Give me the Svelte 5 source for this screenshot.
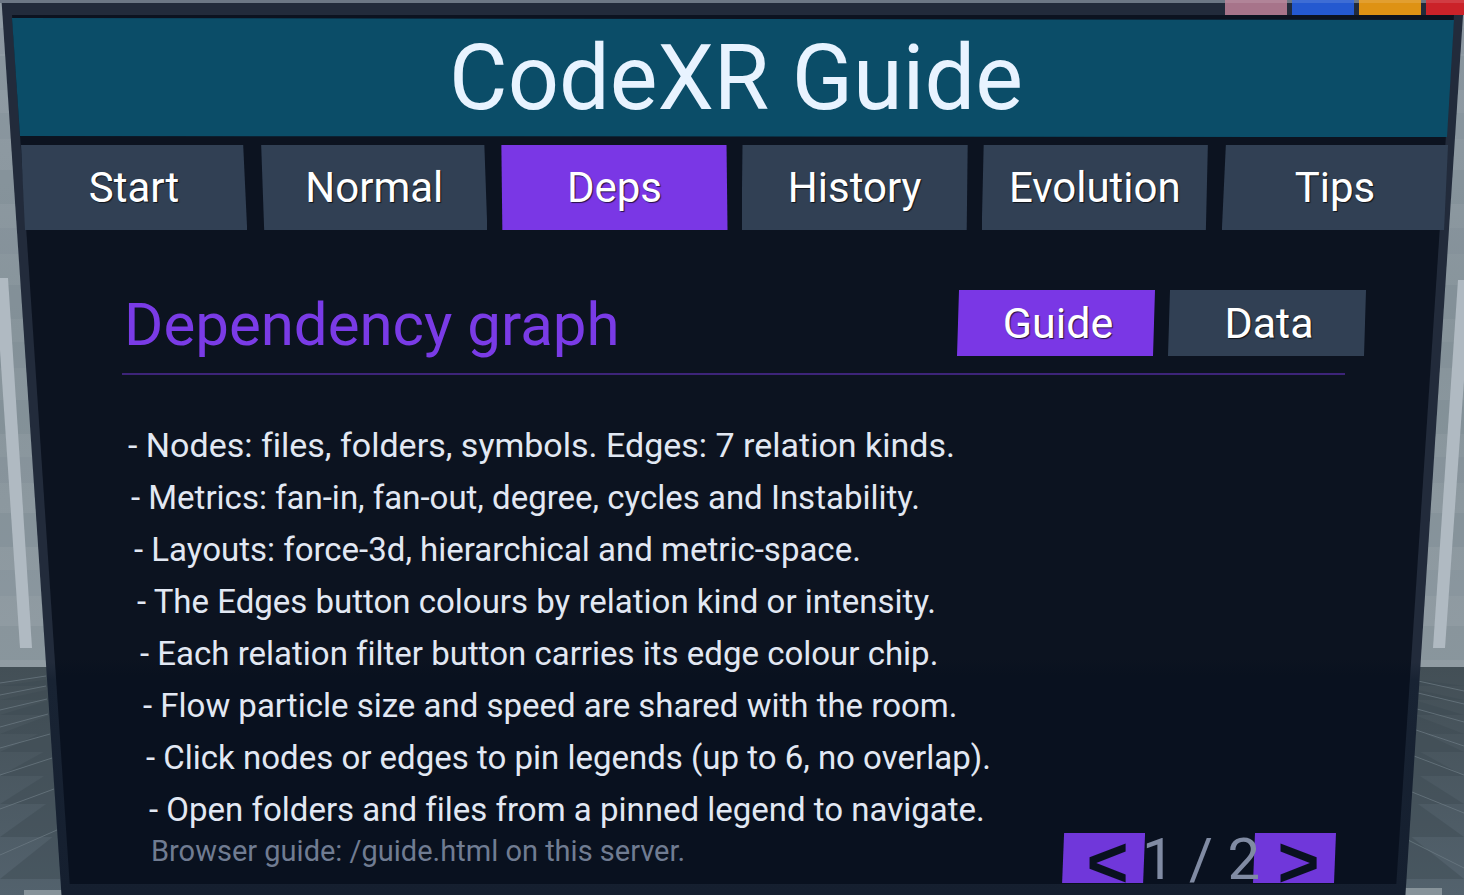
<script>
    const tabs = [
        { name: 'Start', lean: 4 },
        { name: 'Normal', lean: 3 },
        { name: 'Deps', lean: 1 },
        { name: 'History', lean: -1 },
        { name: 'Evolution', lean: -2 },
        { name: 'Tips', lean: -4 }
    ];

    const views = ['Guide', 'Data'];

    const lines = [
        'Nodes: files, folders, symbols. Edges: 7 relation kinds.',
        'Metrics: fan-in, fan-out, degree, cycles and Instability.',
        'Layouts: force-3d, hierarchical and metric-space.',
        'The Edges button colours by relation kind or intensity.',
        'Each relation filter button carries its edge colour chip.',
        'Flow particle size and speed are shared with the room.',
        'Click nodes or edges to pin legends (up to 6, no overlap).',
        'Open folders and files from a pinned legend to navigate.'
    ];

    const controls = ['pink', 'blue', 'orange', 'red'];
    const wallRows = [28, 56, 113, 170, 228, 285, 342, 400, 457, 513, 570, 626];
    const floorRows = [682, 692, 703, 718, 732, 752, 776, 805, 843];

    let activeTab = $state('Deps');
    let activeView = $state('Guide');
    let page = $state(1);
</script>

<main class="room">
    <svg class="backdrop" viewBox="0 0 1464 895" preserveAspectRatio="none" aria-hidden="true">
        <defs>
            <linearGradient id="wall" x1="0" y1="0" x2="0" y2="1">
                <stop offset="0" stop-color="#929da6" />
                <stop offset="0.5" stop-color="#87949b" />
                <stop offset="1" stop-color="#919ca3" />
            </linearGradient>
            <linearGradient id="floor" x1="0" y1="0" x2="0" y2="1">
                <stop offset="0" stop-color="#434f56" />
                <stop offset="1" stop-color="#53626d" />
            </linearGradient>
        </defs>
        <rect width="1464" height="667" fill="url(#wall)" />
        {#each wallRows as y, i}
            <rect {y} width="1464" height={i % 2 ? 34 : 26} fill="#74828a" opacity={i % 2 ? 0.25 : 0.15} />
        {/each}
        <polygon points="0,278 8,278 32,648 20,648 0,350" fill="#b0bac2" />
        <polygon points="1464,280 1458,280 1433,648 1445,648 1464,380" fill="#b0bac2" />
        <rect y="667" width="1464" height="228" fill="url(#floor)" />
        <g fill="#3d4a52" opacity="0.45">
            {#each floorRows as y, i}
                <polygon points="0,{y + 4 + i * 4} 60,{y - 4 - i} 60,{y + 4 + i * 4}" />
                <polygon points="1464,{y + 4 + i * 4} 1404,{y - 4 - i} 1404,{y + 4 + i * 4}" />
            {/each}
        </g>
        <g stroke="#6e7c85" stroke-width="1" opacity="0.7">
            <path d="M0 683 46 676M0 695 46 686M0 710 47 699M0 727 48 714M0 748 50 734M0 775 52 758M0 809 54 789M0 855 57 830" />
            <path d="M1464 691 1418 681M1464 704 1418 693M1464 722 1417 709M1464 746 1416 730M1464 775 1414 756M1464 813 1412 792M1464 868 1408 840" />
        </g>
        <rect x="24" y="890" width="40" height="5" fill="#87939a" />
        <rect x="1400" y="888" width="42" height="7" fill="#87939a" />
    </svg>

    <section class="panel">
        <div class="controls">
            {#each controls as color}
                <button class="control {color}" aria-label={color}></button>
            {/each}
        </div>

        <div class="screen">
            <header>
                <h1>CodeXR Guide</h1>
            </header>

            <nav class="tabs">
                {#each tabs as tab}
                    <button
                        class="tile"
                        class:active={activeTab === tab.name}
                        style:--l="{Math.max(0, tab.lean)}px"
                        style:--r="{Math.max(0, -tab.lean)}px"
                        onclick={() => (activeTab = tab.name)}
                    >{tab.name}</button>
                {/each}
            </nav>

            <div class="heading">
                <h2>Dependency graph</h2>
                <div class="views">
                    {#each views as view}
                        <button class="tile" class:active={activeView === view} onclick={() => (activeView = view)}>{view}</button>
                    {/each}
                </div>
            </div>
            <hr />

            <ul>
                {#each lines as line, i}
                    <li style:padding-left="{i * 3}px">- {line}</li>
                {/each}
            </ul>

            <footer>
                <p>Browser guide: /guide.html on this server.</p>
                <div class="pager">
                    <button class="arrow" onclick={() => (page = 1)}>&lt;</button>
                    <span>{page} / 2</span>
                    <button class="arrow" onclick={() => (page = 2)}>&gt;</button>
                </div>
            </footer>
        </div>
    </section>
</main>

<style>
    :global(body) {
        margin: 0;
        background: #46535c;
    }

    .room {
        position: relative;
        min-height: 100vh;
        display: flex;
        font-family: Roboto, "Liberation Sans", sans-serif;
        font-variant-ligatures: none;
    }

    .backdrop {
        position: absolute;
        inset: 0;
        width: 100%;
        height: 100%;
    }

    .panel {
        position: relative;
        z-index: 0;
        flex: 1;
        display: flex;
        flex-direction: column;
        padding-bottom: 11px;
        box-sizing: border-box;
    }

    /* frame and screen taper towards the floor */
    .panel::before,
    .screen::before {
        content: "";
        position: absolute;
        inset: 0;
        z-index: -1;
    }

    .panel::before {
        background: linear-gradient(#222b3b 74%, #182333 76%, #151f2f);
        clip-path: polygon(0.1% 0, 100% 0, 96% 100%, 4.2% 100%);
    }

    .screen::before {
        background: linear-gradient(#0c1320 74%, #09111f 76%);
        clip-path: polygon(0 0, 100% 0, 96% 100%, 4% 100%);
    }

    .controls {
        display: flex;
        justify-content: flex-end;
        gap: 5px;
        height: 15px;
        background: linear-gradient(#6c7785 3px, transparent 3px);
    }

    .control {
        width: 62px;
        padding: 0;
        border: 0;
        border-top: 3px solid rgba(255, 255, 255, 0.12);
    }

    .control:last-child {
        width: 38px;
    }

    .pink { background-color: #a7748a; }
    .blue { background-color: #2459d0; }
    .orange { background-color: #de9214; }
    .red { background-color: #cb2229; }

    .screen {
        position: relative;
        z-index: 0;
        flex: 1;
        display: flex;
        flex-direction: column;
        margin: 0 10px 0 12px;
        padding-top: 3px;
    }

    header {
        height: 119px;
        display: flex;
        align-items: center;
        justify-content: center;
        background: #0b4d68;
        clip-path: polygon(0 0, 100% 2px, calc(100% - 7px) 100%, 8px 118px);
    }

    h1 {
        margin: 0;
        padding: 3px 0 0 6px;
        font-size: 90px;
        line-height: 108px;
        font-weight: 400;
        color: #e8f3ff;
    }

    .tabs {
        display: flex;
        gap: 14px;
        margin: 8px 6px 0 9px;
    }

    .tile {
        --l: 0px;
        --r: 2px;
        padding: 0 0 0 4px;
        border: 0;
        background: #314054;
        color: #fff;
        font-family: inherit;
        font-size: 43px;
        line-height: 66px;
        text-shadow: 1px 1px 1px rgba(0, 0, 0, 0.7);
        clip-path: polygon(var(--r) 0, calc(100% - var(--l)) 0, calc(100% - var(--r)) 100%, var(--l) 100%);
        cursor: pointer;
    }

    .tabs .tile {
        flex: 1;
        min-width: 0;
        padding: 0;
        font-size: 42px;
        line-height: 85px;
    }

    .tile.active {
        background: #7a37e5;
    }

    .heading {
        display: flex;
        justify-content: space-between;
        align-items: center;
        margin: 60px 88px 0 112px;
    }

    h2 {
        margin: 0;
        padding-top: 4px;
        font-size: 60px;
        line-height: 62px;
        font-weight: 400;
        color: #7a3be6;
    }

    .views {
        display: flex;
        gap: 13px;
    }

    .views .tile {
        width: 198px;
    }

    hr {
        width: auto;
        height: 2px;
        margin: 17px 109px 0 110px;
        border: 0;
        background: #3d2479;
    }

    ul {
        margin: 43px 0 0 116px;
        padding: 0;
        list-style: none;
        font-size: 33px;
        line-height: 52px;
        color: #e2e8f3;
    }

    li:first-child {
        font-size: 34px;
        line-height: 54px;
    }

    footer {
        display: flex;
        justify-content: space-between;
        align-items: flex-start;
        margin: -3px 118px 0 139px;
    }

    p {
        margin: 0;
        font-size: 29px;
        line-height: 36px;
        color: #707c92;
    }

    .pager {
        display: flex;
        height: 50px;
    }

    .pager span {
        position: relative;
        z-index: 1;
        margin: 0 -7px 0 -3px;
        font-size: 58px;
        line-height: 52px;
        color: #808ba3;
    }

    .arrow {
        position: relative;
        width: 83px;
        height: 50px;
        padding: 8px 0 0 8px;
        border: 0;
        background: none;
        color: #09111f;
        font-family: "Liberation Sans", sans-serif;
        font-size: 72px;
        font-weight: 700;
        line-height: 42px;
        cursor: pointer;
    }

    .arrow::before {
        content: "";
        position: absolute;
        inset: 0;
        z-index: -1;
        background: #7037da;
        clip-path: polygon(2px 0, 100% 0, calc(100% - 2px) 100%, 0 100%);
    }
</style>
